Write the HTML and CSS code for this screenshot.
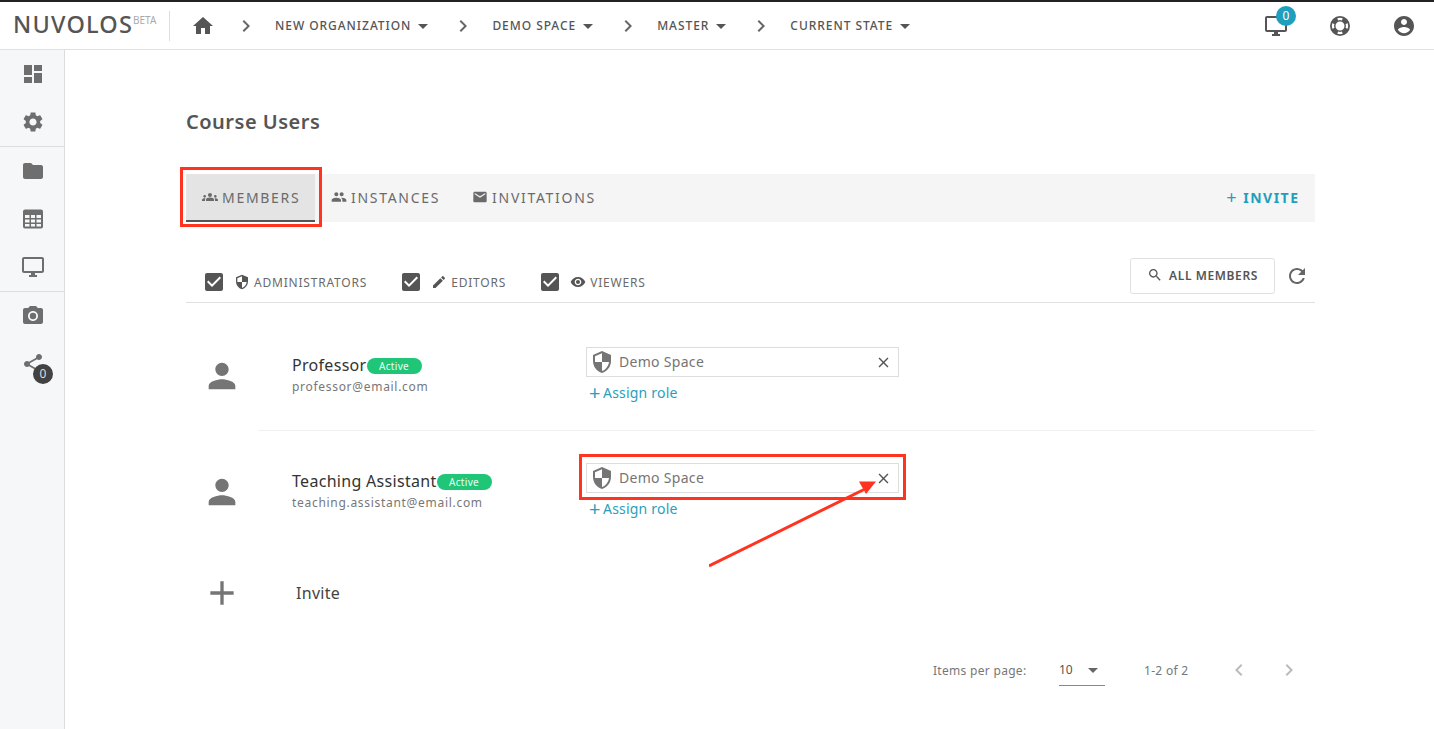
FILE: index.html
```html
<!DOCTYPE html>
<html lang="en">
<head>
<meta charset="utf-8">
<title>Course Users</title>
<link rel="stylesheet" href="styles.css">
</head>
<body>
<svg class="defs" width="0" height="0">
  <symbol id="home" viewBox="0 0 24 24"><path d="M10 20v-6h4v6h5v-8h3L12 3 2 12h3v8z"/></symbol>
  <symbol id="chev" viewBox="0 0 24 24"><path d="M10 6L8.59 7.41 13.17 12l-4.58 4.59L10 18l6-6z"/></symbol>
  <symbol id="chevl" viewBox="0 0 24 24"><path d="M15.41 7.41L14 6l-6 6 6 6 1.41-1.41L10.83 12z"/></symbol>
  <symbol id="caret" viewBox="0 0 24 24"><path d="M7 10l5 5 5-5z"/></symbol>
  <symbol id="dash" viewBox="0 0 24 24"><path d="M3 13h8V3H3v10zm0 8h8v-6H3v6zm10 0h8V11h-8v10zm0-18v6h8V3h-8z"/></symbol>
  <symbol id="gear" viewBox="0 0 24 24"><path d="M19.14 12.94c.04-.3.06-.61.06-.94 0-.32-.02-.64-.07-.94l2.03-1.58c.18-.14.23-.41.12-.61l-1.92-3.32c-.12-.22-.37-.29-.59-.22l-2.39.96c-.5-.38-1.03-.7-1.62-.94l-.36-2.54c-.04-.24-.24-.41-.48-.41h-3.84c-.24 0-.43.17-.47.41l-.36 2.54c-.59.24-1.13.57-1.62.94l-2.39-.96c-.22-.08-.47 0-.59.22L2.74 8.87c-.12.21-.08.47.12.61l2.03 1.58c-.05.3-.09.63-.09.94s.02.64.07.94l-2.03 1.58c-.18.14-.23.41-.12.61l1.92 3.32c.12.22.37.29.59.22l2.39-.96c.5.38 1.03.7 1.62.94l.36 2.54c.05.24.24.41.48.41h3.84c.24 0 .44-.17.47-.41l.36-2.54c.59-.24 1.13-.56 1.62-.94l2.39.96c.22.08.47 0 .59-.22l1.92-3.32c.12-.22.07-.47-.12-.61l-2.01-1.58zM12 15.6c-1.98 0-3.6-1.62-3.6-3.6s1.62-3.6 3.6-3.6 3.6 1.62 3.6 3.6-1.62 3.6-3.6 3.6z"/></symbol>
  <symbol id="folder" viewBox="0 0 24 24"><path d="M10 4H4c-1.1 0-1.99.9-1.99 2L2 18c0 1.1.9 2 2 2h16c1.1 0 2-.9 2-2V8c0-1.1-.9-2-2-2h-8l-2-2z"/></symbol>
  <symbol id="table" viewBox="0 0 24 24"><path fill-rule="evenodd" d="M4 2.5h16a2 2 0 0 1 2 2v15a2 2 0 0 1-2 2H4a2 2 0 0 1-2-2v-15a2 2 0 0 1 2-2zM4 8v3h4.5V8zm6 0v3h4V8zm5.500 0v3H20V8zM4 12.500v3h4.500v-3zm6 0v3h4v-3zm5.500 0v3H20v-3zM4 17v2.500h4.500V17zm6 0v2.500h4V17zm5.500 0v2.500H20V17z"/></symbol>
  <symbol id="desktop" viewBox="0 0 24 24"><path d="M21 2H3c-1.100 0-2 .9-2 2v12c0 1.100.9 2 2 2h7v2H8v2h8v-2h-2v-2h7c1.100 0 2-.9 2-2V4c0-1.100-.9-2-2-2zm0 14H3V4h18v12z"/></symbol>
  <symbol id="camera" viewBox="0 0 24 24"><path d="M12 15.200a3.200 3.200 0 1 0 0-6.400 3.200 3.200 0 0 0 0 6.400z"/><path d="M9 2L7.170 4H4c-1.100 0-2 .9-2 2v12c0 1.100.9 2 2 2h16c1.100 0 2-.9 2-2V6c0-1.100-.9-2-2-2h-3.170L15 2H9zm3 15c-2.760 0-5-2.240-5-5s2.240-5 5-5 5 2.240 5 5-2.240 5-5 5z"/></symbol>
  <symbol id="share" viewBox="0 0 24 24"><path d="M18 16.080c-.76 0-1.440.3-1.960.77L8.910 12.700c.05-.23.09-.46.09-.7s-.04-.47-.09-.7l7.050-4.110c.54.5 1.250.81 2.040.81 1.660 0 3-1.340 3-3s-1.340-3-3-3-3 1.340-3 3c0 .24.04.47.09.7L8.040 9.810C7.500 9.310 6.790 9 6 9c-1.660 0-3 1.340-3 3s1.340 3 3 3c.79 0 1.500-.31 2.040-.81l7.120 4.160c-.05.21-.08.43-.08.65 0 1.610 1.310 2.920 2.920 2.920 1.610 0 2.920-1.310 2.920-2.920s-1.310-2.920-2.920-2.920z"/></symbol>
  <symbol id="person" viewBox="0 0 24 24"><path d="M12 12c2.210 0 4-1.790 4-4s-1.790-4-4-4-4 1.790-4 4 1.790 4 4 4zm0 2c-2.670 0-8 1.340-8 4v2h16v-2c0-2.660-5.330-4-8-4z"/></symbol>
  <symbol id="people" viewBox="0 0 24 24"><path d="M16 11c1.660 0 2.990-1.340 2.990-3S17.660 5 16 5c-1.660 0-3 1.340-3 3s1.340 3 3 3zm-8 0c1.660 0 2.990-1.340 2.990-3S9.660 5 8 5C6.340 5 5 6.340 5 8s1.340 3 3 3zm0 2c-2.330 0-7 1.170-7 3.500V19h14v-2.500c0-2.330-4.670-3.500-7-3.500zm8 0c-.29 0-.62.02-.97.05 1.160.84 1.970 1.970 1.970 3.450V19h6v-2.500c0-2.330-4.670-3.500-7-3.500z"/></symbol>
  <symbol id="groups" viewBox="0 0 24 24"><path d="M12 12.750c1.630 0 3.070.39 4.240.9 1.080.48 1.760 1.560 1.760 2.730V18H6v-1.610c0-1.180.68-2.260 1.760-2.730 1.170-.52 2.610-.91 4.240-.91zM4 13c1.100 0 2-.9 2-2s-.9-2-2-2-2 .9-2 2 .9 2 2 2zm1.130 1.100c-.37-.06-.74-.1-1.130-.1-.99 0-1.930.21-2.780.58C.48 14.900 0 15.620 0 16.430V18h4.500v-1.610c0-.83.23-1.610.63-2.290zM20 13c1.100 0 2-.9 2-2s-.9-2-2-2-2 .9-2 2 .9 2 2 2zm4 3.430c0-.81-.48-1.530-1.220-1.850-.85-.37-1.790-.58-2.780-.58-.39 0-.76.04-1.130.1.4.68.63 1.460.63 2.290V18H24v-1.570zM12 6c1.660 0 3 1.340 3 3s-1.340 3-3 3-3-1.340-3-3 1.340-3 3-3z"/></symbol>
  <symbol id="mail" viewBox="0 0 24 24"><path d="M20 4H4c-1.100 0-1.990.9-1.990 2L2 18c0 1.100.9 2 2 2h16c1.100 0 2-.9 2-2V6c0-1.100-.9-2-2-2zm0 4l-8 5-8-5V6l8 5 8-5v2z"/></symbol>
  <symbol id="checkbox" viewBox="0 0 24 24"><path d="M19 3H5c-1.110 0-2 .9-2 2v14c0 1.100.89 2 2 2h14c1.110 0 2-.9 2-2V5c0-1.100-.89-2-2-2zm-9 14l-5-5 1.410-1.410L10 14.170l7.590-7.590L19 8l-9 9z"/></symbol>
  <symbol id="shield" viewBox="0 0 24 24"><path d="M12 1L3 5v6c0 5.550 3.840 10.740 9 12 5.160-1.260 9-6.450 9-12V5l-9-4zm0 10.990h7c-.53 4.120-3.280 7.790-7 8.940V12H5V6.300l7-3.110v8.800z"/></symbol>
  <symbol id="pencil" viewBox="0 0 24 24"><path d="M3 17.250V21h3.750L17.810 9.940l-3.750-3.750L3 17.250zM20.710 7.040c.39-.39.39-1.020 0-1.410l-2.340-2.340c-.39-.39-1.020-.39-1.410 0l-1.830 1.830 3.750 3.750 1.830-1.830z"/></symbol>
  <symbol id="eye" viewBox="0 0 24 24"><path d="M12 4.500C7 4.500 2.730 7.610 1 12c1.730 4.390 6 7.500 11 7.500s9.270-3.110 11-7.500c-1.730-4.390-6-7.500-11-7.500zM12 17c-2.760 0-5-2.240-5-5s2.240-5 5-5 5 2.240 5 5-2.240 5-5 5zm0-8c-1.660 0-3 1.340-3 3s1.340 3 3 3 3-1.340 3-3-1.340-3-3-3z"/></symbol>
  <symbol id="search" viewBox="0 0 24 24"><path d="M15.500 14h-.79l-.28-.27C15.410 12.590 16 11.110 16 9.500 16 5.910 13.090 3 9.500 3S3 5.910 3 9.500 5.910 16 9.500 16c1.610 0 3.090-.59 4.230-1.570l.27.28v.79l5 4.990L20.490 19l-4.990-5zm-6 0C7.010 14 5 11.990 5 9.500S7.010 5 9.500 5 14 7.010 14 9.500 11.990 14 9.500 14z"/></symbol>
  <symbol id="refresh" viewBox="0 0 24 24"><path d="M17.650 6.350C16.200 4.900 14.210 4 12 4c-4.420 0-7.990 3.580-7.990 8s3.570 8 7.990 8c3.730 0 6.840-2.550 7.730-6h-2.080c-.82 2.330-3.040 4-5.650 4-3.310 0-6-2.690-6-6s2.690-6 6-6c1.660 0 3.140.69 4.220 1.780L13 11h7V4l-2.350 2.350z"/></symbol>
  <symbol id="close" viewBox="0 0 24 24"><path d="M19 6.410L17.590 5 12 10.590 6.410 5 5 6.410 10.590 12 5 17.590 6.410 19 12 13.410 17.590 19 19 17.590 13.410 12z"/></symbol>
  <symbol id="plus" viewBox="0 0 24 24"><path d="M19 13h-6v6h-2v-6H5v-2h6V5h2v6h6v2z"/></symbol>
  <symbol id="account" viewBox="0 0 24 24"><path d="M12 2C6.480 2 2 6.480 2 12s4.480 10 10 10 10-4.480 10-10S17.520 2 12 2zm0 3c1.660 0 3 1.340 3 3s-1.340 3-3 3-3-1.340-3-3 1.340-3 3-3zm0 14.200c-2.500 0-4.710-1.280-6-3.220.03-1.990 4-3.080 6-3.080 1.990 0 5.970 1.090 6 3.080-1.290 1.940-3.500 3.220-6 3.220z"/></symbol>
  <symbol id="buoy" viewBox="0 0 24 24"><path fill-rule="evenodd" d="M12 2a10 10 0 1 0 0 20 10 10 0 0 0 0-20zm0 5.500a4.500 4.500 0 1 1 0 9 4.500 4.500 0 0 1 0-9zM9.300 4.300a8.200 8.200 0 0 1 5.400 0l-.8 2.100a6 6 0 0 0-3.800 0zM4.300 9.300l2.100.8a6 6 0 0 0 0 3.800l-2.100.8a8.200 8.200 0 0 1 0-5.400zm15.400 0a8.200 8.200 0 0 1 0 5.400l-2.100-.8a6 6 0 0 0 0-3.800zM10.100 17.600a6 6 0 0 0 3.800 0l.8 2.100a8.200 8.200 0 0 1-5.400 0z"/></symbol>
</svg>

<header class="topbar">
  <div class="logo">NUVOLOS<sup class="beta">BETA</sup></div>
  <svg class="ic home"><use href="#home"/></svg>
  <nav class="crumbs">
    <svg class="ic chev"><use href="#chev"/></svg><span class="crumb">NEW ORGANIZATION</span><svg class="ic caret"><use href="#caret"/></svg>
    <svg class="ic chev"><use href="#chev"/></svg><span class="crumb">DEMO SPACE</span><svg class="ic caret"><use href="#caret"/></svg>
    <svg class="ic chev"><use href="#chev"/></svg><span class="crumb">MASTER</span><svg class="ic caret"><use href="#caret"/></svg>
    <svg class="ic chev"><use href="#chev"/></svg><span class="crumb">CURRENT STATE</span><svg class="ic caret"><use href="#caret"/></svg>
  </nav>
  <div class="top-actions">
    <div class="monitor"><svg class="ic top-ic"><use href="#desktop"/></svg><span class="monitor-badge">0</span></div>
    <svg class="ic top-ic"><use href="#buoy"/></svg>
    <svg class="ic top-ic"><use href="#account"/></svg>
  </div>
</header>

<div class="shell">
  <aside class="sidebar">
    <div class="side-group">
      <div class="side-item"><svg class="ic side-ic"><use href="#dash"/></svg></div>
      <div class="side-item"><svg class="ic side-ic"><use href="#gear"/></svg></div>
    </div>
    <div class="side-group">
      <div class="side-item"><svg class="ic side-ic"><use href="#folder"/></svg></div>
      <div class="side-item"><svg class="ic side-ic"><use href="#table"/></svg></div>
      <div class="side-item"><svg class="ic side-ic"><use href="#desktop"/></svg></div>
    </div>
    <div class="side-group plain">
      <div class="side-item"><svg class="ic side-ic"><use href="#camera"/></svg></div>
      <div class="side-item share-item"><svg class="ic side-ic"><use href="#share"/></svg><span class="share-badge">0</span></div>
    </div>
  </aside>

  <main class="content">
    <h1 class="title">Course Users</h1>

    <div class="tabs">
      <div class="tab active"><svg class="ic tab-ic"><use href="#groups"/></svg>MEMBERS</div>
      <div class="tab"><svg class="ic tab-ic"><use href="#people"/></svg>INSTANCES</div>
      <div class="tab"><svg class="ic tab-ic"><use href="#mail"/></svg>INVITATIONS</div>
      <div class="invite-btn"><span class="invite-plus">+</span>INVITE</div>
    </div>

    <div class="filters">
      <label class="filter"><svg class="ic check"><use href="#checkbox"/></svg><svg class="ic filter-ic"><use href="#shield"/></svg>ADMINISTRATORS</label>
      <label class="filter"><svg class="ic check"><use href="#checkbox"/></svg><svg class="ic filter-ic"><use href="#pencil"/></svg>EDITORS</label>
      <label class="filter"><svg class="ic check"><use href="#checkbox"/></svg><svg class="ic filter-ic"><use href="#eye"/></svg>VIEWERS</label>
      <div class="filter-actions">
        <div class="all-btn"><svg class="ic search"><use href="#search"/></svg>ALL MEMBERS</div>
        <svg class="ic refresh"><use href="#refresh"/></svg>
      </div>
    </div>

    <section class="member first">
      <svg class="ic avatar"><use href="#person"/></svg>
      <div class="who">
        <div class="name">Professor<span class="status">Active</span></div>
        <div class="email">professor@email.com</div>
      </div>
      <div class="roles">
        <div class="role"><svg class="ic role-ic"><use href="#shield"/></svg><span class="role-name">Demo Space</span><svg class="ic role-x"><use href="#close"/></svg></div>
        <div class="assign"><span class="assign-plus">+</span>Assign role</div>
      </div>
    </section>
    <section class="member second">
      <svg class="ic avatar"><use href="#person"/></svg>
      <div class="who">
        <div class="name">Teaching Assistant<span class="status">Active</span></div>
        <div class="email">teaching.assistant@email.com</div>
      </div>
      <div class="roles">
        <div class="role"><svg class="ic role-ic"><use href="#shield"/></svg><span class="role-name">Demo Space</span><svg class="ic role-x"><use href="#close"/></svg></div>
        <div class="assign"><span class="assign-plus">+</span>Assign role</div>
      </div>
    </section>

    <div class="invite-row">
      <svg class="ic avatar plus"><use href="#plus"/></svg>
      <span class="invite-label">Invite</span>
    </div>

    <div class="pager">
      <span class="pager-label">Items per page:</span>
      <div class="pager-select"><span>10</span><svg class="ic pager-caret"><use href="#caret"/></svg></div>
      <span class="pager-range">1-2 of 2</span>
      <svg class="ic pager-nav"><use href="#chevl"/></svg>
      <svg class="ic pager-nav"><use href="#chev"/></svg>
    </div>
  </main>
</div>

<div class="mark mark-tab"></div>
<div class="mark mark-role"></div>
<svg class="arrow" width="200" height="110" viewBox="0 0 200 110">
  <line x1="0" y1="107" x2="158" y2="29" stroke="#ff3420" stroke-width="3"/>
  <polygon points="167,22.500 150,22.500 157,35" fill="#ff3420"/>
</svg>
</body>
</html>
```

FILE: styles.css
```css
* { box-sizing: border-box; }
html, body { margin: 0; height: 100%; overflow: hidden; }
body {
  position: relative;
  background: #fff;
  font-family: "Noto Sans", "Open Sans", sans-serif;
  color: #555;
}
.defs { position: absolute; }
.ic { display: block; flex: none; fill: currentColor; }

/* top bar */
.topbar {
  height: 50px;
  display: flex;
  align-items: center;
  border-top: 2px solid #222;
  border-bottom: 1px solid #e0e0e0;
  padding-left: 13px;
  color: #555;
}
.logo {
  width: 157px;
  height: 30px;
  border-right: 1px solid #ddd;
  font-size: 23.5px;
  font-weight: 500;
  line-height: 27px;
  letter-spacing: 1.2px;
  color: #555;
  white-space: nowrap;
}
.beta {
  font-size: 10px;
  font-weight: 400;
  line-height: 0;
  vertical-align: 9px;
  letter-spacing: 0;
  color: #aaa;
}
.home { width: 24px; height: 24px; margin-left: 21px; }
.crumbs { display: flex; align-items: center; }
.chev { width: 24px; height: 24px; margin-left: 23px; margin-right: 17px; color: #666; }
.crumbs .chev:first-child { margin-left: 19px; }
.crumb { font-size: 12px; font-weight: 500; letter-spacing: .95px; color: #555; }
.caret { width: 24px; height: 24px; margin-right: -7px; }
.top-actions { margin-left: auto; display: flex; align-items: center; gap: 40px; padding-right: 18px; }
.top-ic { width: 24px; height: 24px; }
.monitor { position: relative; }
.monitor-badge {
  position: absolute;
  left: 12px;
  top: -8px;
  width: 20px;
  height: 20px;
  border-radius: 50%;
  background: #1e9fbd;
  color: #fff;
  font-size: 12px;
  line-height: 20px;
  text-align: center;
}

/* shell */
.shell { display: flex; height: 679px; }
.sidebar {
  width: 65px;
  flex: none;
  background: #f6f7f9;
  border-right: 1px solid #ddd;
}
.side-group { border-bottom: 1px solid #ddd; }
.side-group.plain { border-bottom: 0; }
.side-item {
  height: 48px;
  display: flex;
  align-items: center;
  justify-content: center;
  padding-left: 1px;
  color: #6e6e6e;
  position: relative;
}
.side-ic { width: 24px; height: 24px; }
.share-badge {
  position: absolute;
  left: 33px;
  top: 24px;
  width: 20px;
  height: 20px;
  border-radius: 50%;
  background: #424242;
  color: #ddd;
  font-size: 12px;
  line-height: 20px;
  text-align: center;
}

/* content */
.content { flex: 1; padding: 0 119px 0 121px; min-width: 0; }
.title {
  margin: 57px 0 0;
  height: 29px;
  font-size: 20px;
  line-height: 29px;
  font-weight: 600;
  letter-spacing: .5px;
  color: #555;
}
.tabs {
  margin-top: 38px;
  height: 48px;
  display: flex;
  align-items: stretch;
  background: #f5f5f5;
}
.tab {
  display: flex;
  align-items: center;
  padding: 0 16px 2px;
  font-size: 14px;
  letter-spacing: 1.7px;
  color: #6a6a6a;
}
.tab.active { width: 129px; padding-bottom: 0; background: #e4e4e4; border-bottom: 2px solid #555; }
.tab-ic { width: 16px; height: 16px; margin-right: 4px; }
.invite-btn {
  margin-left: auto;
  align-self: center;
  display: flex;
  align-items: center;
  padding: 0 15.5px 2px 0;
  font-size: 14px;
  font-weight: 700;
  letter-spacing: 1.5px;
  color: #1e9fbd;
}
.invite-plus { width: 17px; font-size: 18px; line-height: 20px; font-weight: 400; letter-spacing: 0; }

.filters {
  height: 81px;
  padding-left: 16px;
  display: flex;
  align-items: flex-end;
  border-bottom: 1px solid #e0e0e0;
}
.filter {
  display: flex;
  align-items: center;
  height: 24px;
  margin-bottom: 8px;
  margin-right: 32px;
  font-size: 12px;
  letter-spacing: .8px;
  color: #6a6a6a;
}
.check { width: 24px; height: 24px; margin-right: 8px; color: #555; }
.filter-ic { width: 16px; height: 16px; margin-right: 4px; color: #555; }
.filter-actions { margin-left: auto; align-self: stretch; display: flex; align-items: flex-end; padding-bottom: 8px; }
.all-btn {
  width: 145px;
  height: 36px;
  display: flex;
  align-items: center;
  justify-content: center;
  padding-bottom: 2px;
  border: 1px solid #e0e0e0;
  border-radius: 3px;
  font-size: 12px;
  font-weight: 600;
  letter-spacing: .6px;
  color: #555;
}
.search { width: 16px; height: 16px; margin-right: 6px; }
.refresh { width: 24px; height: 24px; margin: 0 6px 6px 10px; color: #666; }

.member { display: flex; align-items: flex-start; }
.member.first { height: 127px; padding-top: 44px; }
.member.second { height: 143px; padding-top: 33px; position: relative; }
.member.second::before {
  content: "";
  position: absolute;
  left: 72px;
  right: 0;
  top: 0;
  border-top: 1px solid #f0f0f0;
}
.avatar { width: 40px; height: 40px; margin: 9px 0 0 16px; color: #757575; }
.who { width: 294px; margin: 6px 0 0 50px; }
.name { display: flex; align-items: center; font-size: 16px; line-height: 24px; letter-spacing: .3px; color: #333; }
.status {
  width: 55px;
  height: 16px;
  margin-top: 2px;
  border-radius: 8px;
  background: #1fc678;
  color: #e8fff4;
  font-size: 10px;
  line-height: 16px;
  text-align: center;
  letter-spacing: .3px;
}
.email { margin-top: 2px; font-size: 12px; line-height: 16px; letter-spacing: .7px; color: #777; }
.roles { width: 313px; }
.role {
  height: 30px;
  display: flex;
  align-items: center;
  border: 1px solid #ddd;
  padding: 0 6px 2px 3px;
  font-size: 14px;
  letter-spacing: .3px;
  color: #757575;
}
.role-ic { width: 24px; height: 24px; margin: 2px 5px 0 0; color: #757575; }
.role-name { flex: 1; }
.role-x { width: 17px; height: 17px; margin-top: 2px; color: #555; }
.assign { display: flex; align-items: center; padding: 6px 0 0 3px; font-size: 14px; line-height: 20px; letter-spacing: .2px; color: #2a9fbc; }
.assign-plus { width: 14px; font-size: 20px; font-weight: 400; letter-spacing: 0; }

.invite-row { display: flex; align-items: center; height: 40px; }
.avatar.plus { margin-top: 0; }
.invite-label { margin-left: 54px; font-size: 16px; letter-spacing: .3px; color: #444; }

.pager {
  margin-top: 41px;
  height: 32px;
  display: flex;
  align-items: center;
  font-size: 12px;
  color: #777;
}
.pager-label { flex: none; width: 126px; margin-left: 747px; letter-spacing: .3px; }
.pager-select {
  flex: none;
  width: 46px;
  height: 32px;
  display: flex;
  align-items: center;
  justify-content: space-between;
  border-bottom: 1px solid #888;
  color: #555;
}
.pager-caret { width: 24px; height: 24px; color: #666; }
.pager-range { flex: none; margin-left: 39px; width: 83px; letter-spacing: .3px; }
.pager-nav { width: 24px; height: 24px; color: #bbb; }
.pager-nav + .pager-nav { margin-left: 26px; }

/* annotations */
.mark { position: absolute; border: 3px solid #ff3420; }
.mark-tab { left: 180px; top: 167px; width: 142px; height: 60px; }
.mark-role { left: 579px; top: 454px; width: 327px; height: 46px; }
.arrow { position: absolute; left: 709px; top: 459px; }
```
